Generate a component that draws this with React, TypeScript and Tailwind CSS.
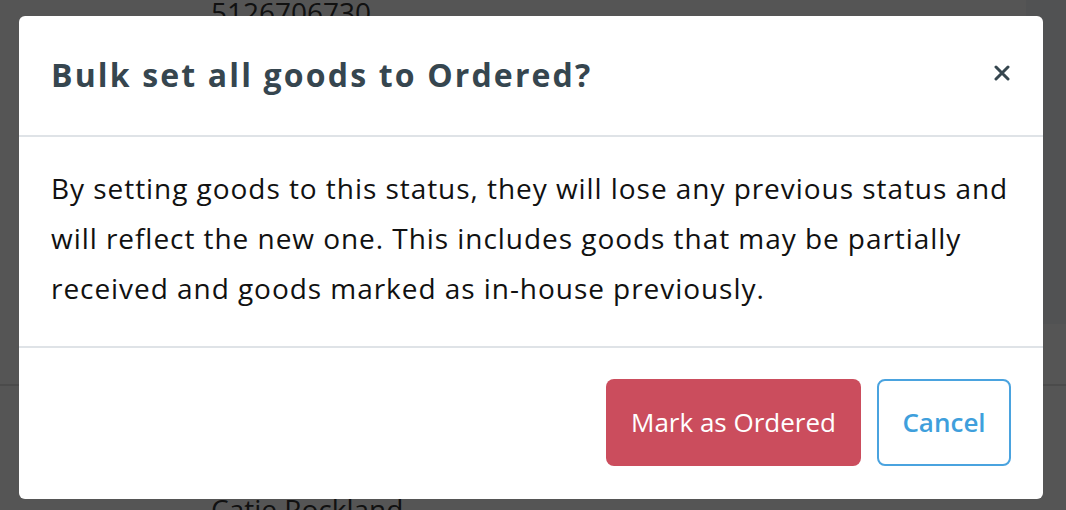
import React from "react";

export default function App() {
  return (
    <div className="relative w-[1066px] h-[510px] overflow-hidden bg-white" style={{ fontFamily: "'Open Sans', Lato, sans-serif" }}>
      {/* background page */}
      <div className="absolute inset-0">
        <div className="absolute left-[211px] top-[-9px] text-[28px] text-[#333]">5126706730</div>
        <div className="absolute right-0 top-0 w-[40px] h-[324px] bg-[#f2f5f9]"></div>
        <div className="absolute left-0 right-0 top-[384px] h-[2px] bg-[#e2e2e2]"></div>
        <div className="absolute left-[211px] top-[488px] text-[28px] text-[#333]">Catie Rockland</div>
      </div>
      {/* overlay */}
      <div className="absolute inset-0 bg-black/[0.667]"></div>
      {/* modal */}
      <div className="absolute left-[19px] top-[16px] w-[1024px] h-[483px] bg-white rounded-[6px] flex flex-col">
        <div className="h-[121px] flex items-center justify-between pl-[32px] pr-[33px] border-b-2 border-[#dfe3e7]">
          <h2 className="text-[32px] font-bold text-[#36464f] tracking-[2.15px] mt-[-2px]">Bulk set all goods to Ordered?</h2>
          <svg width="16" height="16" viewBox="0 0 16 16" className="mt-[-6px]">
            <path d="M2 2 L14 14 M14 2 L2 14" stroke="#36464f" strokeWidth="3" strokeLinecap="round" />
          </svg>
        </div>
        <div className="h-[211px] flex items-center pl-[32px] pr-[20px] border-b-2 border-[#dfe3e7]">
          <p className="text-[28px] leading-[50px] tracking-[0.95px] text-[#111] mt-[-8px] whitespace-nowrap">
            By setting goods to this status, they will lose any previous status and
            <br />
            will reflect the new one. This includes goods that may be partially
            <br />
            received and goods marked as in-house previously.
          </p>
        </div>
        <div className="flex-1 flex items-start justify-end gap-[16px] pt-[31px] pr-[32px]">
          <button className="w-[255px] h-[87px] rounded-[8px] bg-[#cb4d5d] text-white text-[26px]">Mark as Ordered</button>
          <button className="w-[134px] h-[87px] rounded-[8px] border-2 border-[#4aa3df] bg-white text-[#3f9fdc] text-[26px] font-semibold">Cancel</button>
        </div>
      </div>
    </div>
  );
}
